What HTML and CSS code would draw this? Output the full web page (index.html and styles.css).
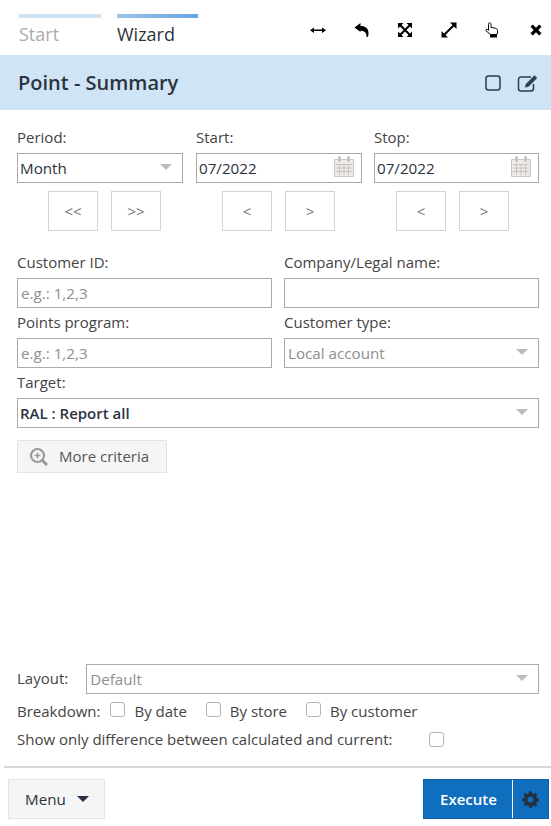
FILE: index.html
```html
<!DOCTYPE html>
<html lang="en">
<head>
  <meta charset="UTF-8">
  <meta name="viewport" content="width=device-width, initial-scale=1.0">
  <title>Point - Summary</title>
  <link rel="stylesheet" href="styles.css">
</head>
<body>
  <div class="page">
    <!-- Tabs and window tools -->
    <div class="topbar">
      <div class="tab tab-off"><span class="tab-bar"></span>Start</div>
      <div class="tab tab-on"><span class="tab-bar"></span>Wizard</div>
      <div class="tools">
        <svg class="tool" viewBox="0 0 16 16"><path d="M0 8.300 4 5.500v2h8v-2l4 2.800-4 2.800v-2H4v2z"/></svg>
        <svg class="tool" viewBox="0 0 16 16"><path d="M0.500 5.500 6.500 1v3c5 0 8 2.500 8 7 0 1.500-.2 3-.7 4h-1.300c.2-3.800-1.500-6.300-6-6.300V10z"/></svg>
        <svg class="tool" viewBox="0 0 16 16"><path d="M1 1h5.500L1 6.500zM15 1v5.500L9.500 1zM1 15V9.500L6.500 15zM15 15H9.500L15 9.500z"/><path class="tool-line" d="m3 3 10 10M13 3 3 13"/></svg>
        <svg class="tool" viewBox="0 0 16 16"><path d="M15.500.5v6.500L9 .5zM.5 15.500V9L7 15.500z"/><path class="tool-line" d="M12.500 3.500 3.500 12.500"/></svg>
        <svg class="tool" viewBox="0 0 16 16"><path class="hand" d="M5.500.8c1 0 1.500.7 1.500 1.500v3l4.500 1c1.200.3 2 1 2 2.200v2.500l-.5 1.500H6.500L2 8.800c-.7-1 .5-2 1.500-1.300l1 .8V2.300c0-.8 0-1.500 1-1.500z"/><path d="M6 12h7v3.500H6z"/></svg>
        <svg class="tool" viewBox="0 0 16 16"><path d="M4.800 2.500 8 5.700l3.200-3.200 2.300 2.300L10.300 8l3.200 3.200-2.300 2.300L8 10.300l-3.200 3.200-2.300-2.300L5.700 8 2.500 4.800z"/></svg>
      </div>
    </div>

    <div class="titlebar">
      <h1>Point - Summary</h1>
      <svg class="title-icon" viewBox="0 0 18 18"><rect x="2" y="2" width="14" height="14" rx="2.500"/></svg>
      <svg class="title-icon" viewBox="0 0 22 18"><path d="M14 3H4a2.500 2.500 0 0 0-2.500 2.500v9A2.500 2.500 0 0 0 4 17h10a2.500 2.500 0 0 0 2.500-2.500V10"/><path class="fill" d="M17.500 1 20.500 4 11.500 13 7.500 14 8.500 10z"/></svg>
    </div>

    <form class="form">
      <div class="period-row">
        <div class="period-col">
          <label>Period:</label>
          <div class="field">Month<span class="arrow"></span></div>
          <div class="steps"><button type="button">&lt;&lt;</button><button type="button">&gt;&gt;</button></div>
        </div>
        <div class="period-col">
          <label>Start:</label>
          <div class="field">07/2022
            <svg class="cal" viewBox="0 0 20 21"><path d="M.5 3.500h19v17H.5z"/><path class="cal-lines" d="M2 8.500h16M2 12h16M2 15.500h16M5.500 8.500V19M10 8.500V19M14.500 8.500V19"/><rect class="cal-ring" x="4" y="0" width="3" height="6" rx="1.500"/><rect class="cal-ring" x="13" y="0" width="3" height="6" rx="1.500"/></svg>
          </div>
          <div class="steps"><button type="button">&lt;</button><button type="button">&gt;</button></div>
        </div>
        <div class="period-col">
          <label>Stop:</label>
          <div class="field">07/2022
            <svg class="cal" viewBox="0 0 20 21"><path d="M.5 3.500h19v17H.5z"/><path class="cal-lines" d="M2 8.500h16M2 12h16M2 15.500h16M5.500 8.500V19M10 8.500V19M14.500 8.500V19"/><rect class="cal-ring" x="4" y="0" width="3" height="6" rx="1.500"/><rect class="cal-ring" x="13" y="0" width="3" height="6" rx="1.500"/></svg>
          </div>
          <div class="steps"><button type="button">&lt;</button><button type="button">&gt;</button></div>
        </div>
      </div>

      <div class="criteria">
        <div class="criteria-col">
          <label>Customer ID:</label>
          <div class="field hint">e.g.: 1,2,3</div>
        </div>
        <div class="criteria-col">
          <label>Company/Legal name:</label>
          <div class="field"></div>
        </div>
        <div class="criteria-col">
          <label>Points program:</label>
          <div class="field hint">e.g.: 1,2,3</div>
        </div>
        <div class="criteria-col">
          <label>Customer type:</label>
          <div class="field hint">Local account<span class="arrow"></span></div>
        </div>
        <div class="criteria-col wide">
          <label>Target:</label>
          <div class="field strong">RAL : Report all<span class="arrow"></span></div>
        </div>
      </div>

      <button type="button" class="more">
        <svg class="more-icon" viewBox="0 0 20 20"><circle cx="8.500" cy="8.500" r="6.500"/><path class="plus" d="M8.500 5.500v6M5.500 8.500h6"/><path class="handle" d="m13.500 13.500 4.500 4.500"/></svg>
        <span class="more-label">More criteria</span>
      </button>

      <div class="options">
        <div class="layout-row">
          <label>Layout:</label>
          <div class="field hint">Default<span class="arrow"></span></div>
        </div>
        <div class="check-row">
          <span class="check-label">Breakdown:</span>
          <span class="check"><i class="box"></i>By date</span>
          <span class="check"><i class="box"></i>By store</span>
          <span class="check"><i class="box"></i>By customer</span>
        </div>
        <div class="check-row diff-row">
          <span class="diff-label">Show only difference between calculated and current:</span>
          <i class="box"></i>
        </div>
      </div>
    </form>

    <div class="footer">
      <button type="button" class="menu">Menu<span class="menu-arrow"></span></button>
      <div class="execute">
        <span class="execute-label">Execute</span>
        <span class="execute-gear">
          <svg class="gear" viewBox="0 0 24 24"><path fill-rule="evenodd" d="M10 1h4l.6 3.100 1.900.8L19.100 3.100 21.900 5.900l-1.800 2.600.8 1.900L24 11v4l-3.100.6-.8 1.900 1.800 2.600-2.800 2.800-2.600-1.800-1.900.8L14 24h-4l-.6-3.100-1.900-.8-2.600 1.800-2.800-2.800 1.800-2.600-.8-1.900L0 15v-4l3.100-.6.800-1.900L2.100 5.900 4.900 3.100l2.600 1.800 1.900-.8zM12 8.500a4 4 0 1 0 0 8 4 4 0 0 0 0-8z" transform="translate(0 -.5)"/></svg>
        </span>
      </div>
    </div>
  </div>
</body>
</html>
```

FILE: styles.css
```css
* {
  box-sizing: border-box;
}

body {
  margin: 0;
  font-family: "Open Sans", sans-serif;
  font-size: 15px;
  color: #444;
  background-color: #fff;
}

.page {
  height: 826px;
  display: flex;
  flex-direction: column;
  overflow: hidden;
}

/* top bar */
.topbar {
  height: 55px;
  padding: 14px 0 0 19px;
  display: flex;
}

.tab {
  width: 82px;
  margin-right: 16px;
  font-size: 18px;
  line-height: 25px;
}

.tab-bar {
  display: block;
  height: 4px;
  margin-bottom: 4px;
}

.tab-off {
  color: #aaa;
}

.tab-off .tab-bar {
  background-color: #cfe5f6;
}

.tab-on {
  width: 81px;
  color: #2c3340;
}

.tab-on .tab-bar {
  background: linear-gradient(to right, #9cc5ea, #66a5de);
}

.tools {
  margin-left: auto;
  padding: 8px 7px 0 0;
  display: flex;
  gap: 27.600px;
}

.tool {
  width: 16px;
  height: 16px;
  fill: #000;
}

.tool .hand {
  fill: #fff;
  stroke: #000;
  stroke-width: 1;
}

.tool-line {
  fill: none;
  stroke: #000;
  stroke-width: 2;
}

/* title band */
.titlebar {
  height: 55px;
  padding: 0 12px 0 18px;
  display: flex;
  align-items: center;
  background-color: #cfe5f6;
}

.titlebar h1 {
  margin: 0 auto 0 0;
  font-size: 20px;
  font-weight: 600;
  color: #2c3340;
}

.title-icon {
  width: 18px;
  height: 18px;
  fill: none;
  stroke: #2c3a52;
  stroke-width: 1.500;
}

.title-icon:last-child {
  width: 22px;
  margin-left: 15px;
}

.title-icon .fill {
  fill: #2c3a52;
  stroke: #cfe5f6;
  stroke-width: .6;
}

/* form */
.form {
  flex: 1;
  padding: 18px 12px 0 17px;
  display: flex;
  flex-direction: column;
}

label {
  display: block;
  height: 20px;
  line-height: 18px;
}

.field {
  height: 30px;
  margin-top: 5px;
  padding: 0 2px;
  display: flex;
  align-items: center;
  position: relative;
  font-size: 15.200px;
  color: #2c3340;
  background-color: #fff;
  border: 1px solid #aaa;
}

.hint {
  padding-left: 3px;
  color: #8e8e8e;
}

.strong {
  font-size: 15px;
  font-weight: 600;
}

.arrow {
  position: absolute;
  right: 10px;
  top: 10px;
  border-left: 6px solid transparent;
  border-right: 6px solid transparent;
  border-top: 6px solid #bbb;
}

.cal {
  position: absolute;
  right: 7px;
  top: 2px;
  width: 20px;
  height: 21px;
  fill: #efebe4;
  stroke: #c8c8c8;
}

.cal-lines {
  fill: none;
  stroke: #c4c4c4;
}

.cal-ring {
  fill: #c4c4c4;
  stroke: none;
}

.period-row {
  display: grid;
  grid-template-columns: 166px 166px 165px;
  column-gap: 13px;
}

.period-col:last-child {
  margin-left: -1px;
  margin-right: 1px;
}

.steps {
  margin-top: 8px;
  display: flex;
  justify-content: flex-start;
  gap: 13px;
  padding-left: 31px;
}

.period-col:nth-child(2) .steps {
  padding-left: 26px;
}

.period-col:last-child .steps {
  padding-left: 22px;
}

.steps button {
  width: 50px;
  height: 40px;
  padding: 0;
  font-family: inherit;
  font-size: 15px;
  color: #777;
  background-color: #fff;
  border: 1px solid #d4d4d4;
}

.criteria {
  margin-top: 22px;
  display: grid;
  grid-template-columns: 255px 255px;
  column-gap: 12px;
  row-gap: 5px;
}

.wide {
  grid-column: 1 / 3;
}

.more {
  width: 150px;
  height: 33px;
  margin-top: 12px;
  padding: 0 0 0 11px;
  display: flex;
  align-items: center;
  gap: 10px;
  font-family: inherit;
  font-size: 15px;
  color: #555;
  background-color: #f5f5f5;
  border: 1px solid #e3e3e3;
}

.more-label {
  margin-top: -2px;
}

.more-icon {
  width: 20px;
  height: 20px;
  fill: none;
  stroke: #999;
  stroke-width: 2.200;
}

.more-icon .plus {
  stroke-width: 1.500;
}

.more-icon .handle {
  stroke-width: 3;
}

.options {
  margin-top: auto;
  padding-bottom: 17px;
}

.layout-row {
  display: flex;
  align-items: center;
  gap: 18px;
}

.layout-row .field {
  flex: 1;
  margin-top: 0;
}

.check-row {
  height: 20px;
  margin-top: 7px;
  display: flex;
  align-items: center;
}

.check-label {
  margin-right: 10px;
}

.check {
  display: flex;
  align-items: center;
  gap: 9px;
  margin-right: 19px;
}

.box {
  width: 15px;
  height: 15px;
  display: block;
  margin-top: -4px;
  background-color: #fff;
  border: 1px solid #b5b5b5;
  border-radius: 3px;
}

.diff-row {
  margin-top: 8px;
}

.diff-label {
  margin-right: 37px;
}

.diff-row .box {
  margin-top: 0;
}

/* footer */
.footer {
  height: 60px;
  margin-left: 4px;
  padding: 11px 2px 0 4px;
  display: flex;
  justify-content: space-between;
  align-items: flex-start;
  border-top: 2px solid #d8d8d8;
}

.menu {
  width: 97px;
  height: 40px;
  padding: 0 0 0 16px;
  display: flex;
  align-items: center;
  font-family: inherit;
  font-size: 15.200px;
  color: #2c3340;
  background-color: #f5f5f5;
  border: 1px solid #e3e3e3;
}

.menu-arrow {
  margin-left: 11px;
  border-left: 6px solid transparent;
  border-right: 6px solid transparent;
  border-top: 6px solid #2c3340;
}

.execute {
  width: 126px;
  height: 40px;
  display: flex;
  color: #fff;
  background-color: #106ebe;
  border: 1px solid #0e62aa;
}

.execute-label {
  width: 88px;
  padding-left: 1px;
  display: flex;
  align-items: center;
  justify-content: center;
  font-weight: 600;
  font-size: 15px;
}

.execute-gear {
  flex: 1;
  display: flex;
  align-items: center;
  justify-content: center;
  border-left: 1px solid #fff;
}

.gear {
  width: 17px;
  height: 17px;
  fill: #24323f;
}
```
